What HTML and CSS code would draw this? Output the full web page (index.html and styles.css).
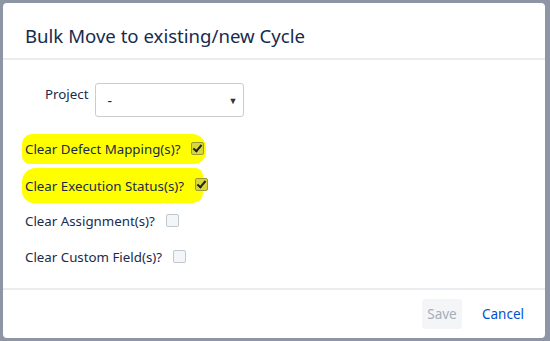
FILE: index.html
```html
<!DOCTYPE html>
<html lang="en">
<head>
    <meta charset="UTF-8">
    <title>Bulk Move</title>
    <link rel="stylesheet" href="styles.css">
</head>
<body>
    <div class="dialog">
        <div class="dialog-header">
            <h2>Bulk Move to existing/new Cycle</h2>
        </div>
        <div class="dialog-body">
            <div class="field">
                <label for="project">Project</label>
                <div class="select">
                    <span>-</span>
                    <span class="arrow">&#9660;</span>
                </div>
            </div>
            <div class="check-row marked first">
                <span class="text">Clear Defect Mapping(s)?</span>
                <span class="box checked"></span>
            </div>
            <div class="check-row marked second">
                <span class="text">Clear Execution Status(s)?</span>
                <span class="box checked"></span>
            </div>
            <div class="check-row">
                <span class="text">Clear Assignment(s)?</span>
                <span class="box"></span>
            </div>
            <div class="check-row">
                <span class="text">Clear Custom Field(s)?</span>
                <span class="box"></span>
            </div>
        </div>
        <div class="dialog-footer">
            <button class="save" disabled>Save</button>
            <a class="cancel" href="#">Cancel</a>
        </div>
    </div>
</body>
</html>
```

FILE: styles.css
```css
body {
    margin: 0;
    height: 341px;
    background-color: #8e96a6;
    font-family: "Noto Sans", "Open Sans", sans-serif;
    color: #172b4d;
    padding: 3px 5px 3px 3px;
    box-sizing: border-box;
    overflow: hidden;
}
.dialog {
    background: white;
    border-radius: 4px;
    height: 335px;
    display: flex;
    flex-direction: column;
}
.dialog-header {
    height: 57px;
    border-bottom: 2px solid #ebecf0;
    padding: 10px 0 0 22px;
    box-sizing: border-box;
    display: flex;
    align-items: center;
}
.dialog-header h2 {
    margin: 0;
    font-size: 18.6px;
    font-weight: normal;
    color: #172b4d;
}
.dialog-body {
    flex: 1;
    padding: 24px 22px 0;
    font-size: 13.3px;
    border-bottom: 2px solid #ebecf0;
}
.field {
    display: flex;
    align-items: flex-start;
    gap: 7px;
    padding-left: 20px;
}
.field label {
    line-height: 18px;
    margin-top: 1px;
}
.select {
    width: 149px;
    height: 34px;
    border: 1px solid #ccc;
    border-radius: 3px;
    display: flex;
    align-items: center;
    justify-content: space-between;
    padding: 0 6px 0 11px;
    box-sizing: border-box;
    margin-top: -1px;
    font-size: 14px;
}
.select .arrow {
    font-size: 9px;
    color: #333;
}
.check-row {
    height: 36px;
    display: flex;
    align-items: center;
    gap: 11px;
}
.check-row.first {
    margin-top: 14px;
}
.check-row .text {
    color: #172b4d;
}
.marked .text {
    background: #ffff00;
    border-radius: 10px 14px 12px 8px;
    margin-left: -3px;
    padding: 6px 26px 6px 3px;
    margin-right: -26px;
}
.second .text {
    padding: 9px 19px 8px 3px;
    margin-right: -19px;
    border-radius: 14px 8px 10px 12px;
}
.box {
    width: 11px;
    height: 11px;
    border: 1px solid #c1c7d0;
    border-radius: 2px;
    background: #f4f5f7;
    position: relative;
    margin-top: -2px;
}
.box.checked {
    background: #d8d83a;
    border-color: #9a9a30;
}
.box.checked::after {
    content: "";
    position: absolute;
    left: 3px;
    top: 0px;
    width: 3px;
    height: 7px;
    border: solid #222;
    border-width: 0 2px 2px 0;
    transform: rotate(40deg);
}
.dialog-footer {
    height: 48px;
    display: flex;
    align-items: center;
    justify-content: flex-end;
    gap: 20px;
    padding-right: 21px;
}
.save {
    font-family: inherit;
    font-size: 13.5px;
    background: #f4f5f7;
    color: #a5adba;
    border: none;
    border-radius: 3px;
    height: 30px;
    width: 40px;
    padding: 0;
}
.cancel {
    color: #0052cc;
    text-decoration: none;
    font-size: 13.5px;
}
```
